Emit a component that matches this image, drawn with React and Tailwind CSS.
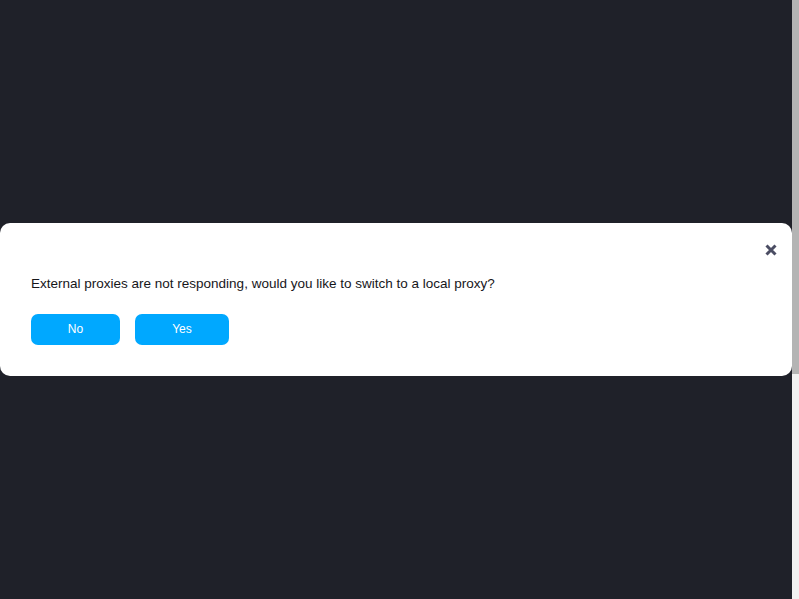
import React from 'react';

const CloseIcon = () => (
  <svg width="12" height="12" viewBox="0 0 12 12" fill="none">
    <path d="M1.5 1.5 L10.5 10.5 M10.5 1.5 L1.5 10.5" stroke="#4b4d63" strokeWidth="3" strokeLinecap="butt" />
  </svg>
);

const App = () => {
  return (
    <div className="flex h-[599px] w-full bg-[#1f2129] font-['Liberation_Sans',Arial,sans-serif]">
      <div className="flex flex-1 flex-col justify-center">
        <div className="rounded-[10px] bg-white pt-[17px] pb-[31px]">
          <div className="flex h-[20px] items-center justify-end pr-[15px]">
            <button className="flex h-[12px] w-[12px] items-center justify-center">
              <CloseIcon />
            </button>
          </div>
          <p className="mt-[16px] px-[31px] text-[13.5px] leading-[15px] text-[#16161a]">
            External proxies are not responding, would you like to switch to a local proxy?
          </p>
          <div className="mt-[23px] flex gap-[15px] px-[31px]">
            <button className="h-[31px] w-[89px] rounded-[7px] bg-[#00a8ff] pb-[2px] text-[12px] leading-[14px] text-white">No</button>
            <button className="h-[31px] w-[94px] rounded-[7px] bg-[#00a8ff] pb-[2px] text-[12px] leading-[14px] text-white">Yes</button>
          </div>
        </div>
      </div>
      <div className="flex w-[7px] flex-col bg-[#f1f1f1]">
        <div className="h-[374px] bg-[#b4b4b4]" />
      </div>
    </div>
  );
};

export default App;
